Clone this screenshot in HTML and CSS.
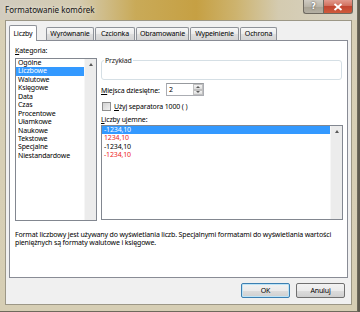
FILE: index.html
```html
<!DOCTYPE html>
<html lang="pl">
<head>
    <meta charset="UTF-8">
    <meta name="viewport" content="width=device-width, initial-scale=1.0">
    <title>Formatowanie komórek</title>
    <link rel="stylesheet" href="styles.css">
</head>
<body>
    <div class="window">
        <div class="titlebar">
            <span class="title">Formatowanie komórek</span>
            <div class="caption">
                <span class="cap-btn help">?</span>
                <span class="cap-btn close">
                    <svg width="10" height="8" viewBox="0 0 10 8"><path d="M1.5 1 L8.5 7 M8.5 1 L1.5 7" stroke="#fff" stroke-width="1.8"/></svg>
                </span>
            </div>
        </div>
        <div class="frame">
            <div class="client">
                <div class="tabs">
                    <span class="tab active">Liczby</span>
                    <span class="tab w-wyr">Wyrównanie</span>
                    <span class="tab w-czc">Czcionka</span>
                    <span class="tab w-obr">Obramowanie</span>
                    <span class="tab w-wyp">Wypełnienie</span>
                    <span class="tab w-och">Ochrona</span>
                </div>
                <div class="panel">
                    <div class="panel-main">
                        <div class="col-left">
                            <div class="label"><u>K</u>ategoria:</div>
                            <div class="listbox cat">
                                <div class="items">
                                    <div class="item">Ogólne</div>
                                    <div class="item selected">Liczbowe</div>
                                    <div class="item">Walutowe</div>
                                    <div class="item">Księgowe</div>
                                    <div class="item">Data</div>
                                    <div class="item">Czas</div>
                                    <div class="item">Procentowe</div>
                                    <div class="item">Ułamkowe</div>
                                    <div class="item">Naukowe</div>
                                    <div class="item">Tekstowe</div>
                                    <div class="item">Specjalne</div>
                                    <div class="item">Niestandardowe</div>
                                </div>
                                <div class="scrollbar"><span class="arrow-up"></span></div>
                            </div>
                        </div>
                        <div class="col-right">
                            <fieldset class="sample">
                                <legend>Przykład</legend>
                                <div class="sample-body"></div>
                            </fieldset>
                            <div class="row-dec">
                                <span class="dec-label"><u>M</u>iejsca dziesiętne:</span>
                                <div class="spin">
                                    <span class="spin-value">2</span>
                                    <div class="spin-btns">
                                        <span class="spin-btn"><span class="arrow-up small"></span></span>
                                        <span class="spin-btn"><span class="arrow-down small"></span></span>
                                    </div>
                                </div>
                            </div>
                            <div class="row-check">
                                <span class="checkbox"></span>
                                <span><u>U</u>żyj separatora 1000 ( )</span>
                            </div>
                            <div class="label neg-label"><u>L</u>iczby ujemne:</div>
                            <div class="listbox neg">
                                <div class="items">
                                    <div class="item selected">-1234,10</div>
                                    <div class="item red">1234,10</div>
                                    <div class="item">-1234,10</div>
                                    <div class="item red">-1234,10</div>
                                </div>
                                <div class="scrollbar"><span class="arrow-up"></span></div>
                            </div>
                        </div>
                    </div>
                    <p class="desc">Format liczbowy jest używany do wyświetlania liczb. Specjalnymi formatami do wyświetlania wartości<br>pieniężnych są formaty walutowe i księgowe.</p>
                </div>
                <div class="buttons">
                    <button class="btn default">OK</button>
                    <button class="btn">Anuluj</button>
                </div>
            </div>
        </div>
    </div>
</body>
</html>
```

FILE: styles.css
```css
body {
    margin: 0;
    background-color: #5f5b4f;
    font-family: 'Noto Sans', 'Open Sans', sans-serif;
    font-size: 7px;
    letter-spacing: -0.15px;
    color: #000;
}

.window {
    width: 358px;
    height: 312px;
    display: flex;
    flex-direction: column;
    box-sizing: border-box;
    border-right: 1px solid #6e6a5c;
    border-bottom: 1px solid #6e6a5c;
    background-color: #d9d1b9;
}

.titlebar {
    height: 20px;
    display: flex;
    align-items: flex-start;
    background: linear-gradient(to right, #d2ccbf 0%, #d4cbb0 22%, #c9aa58 38%, #c6a043 55%, #cdb36e 66%, #d4cbb0 78%, #d8d3c6 100%);
}

.title {
    padding: 5px 0 0 5px;
    font-size: 8px;
    letter-spacing: 0;
    line-height: 10px;
    color: #111;
    text-shadow: 0 0 4px rgba(255, 255, 255, 0.8);
}

.caption {
    margin-left: auto;
    margin-right: 4px;
    display: flex;
}

.cap-btn {
    height: 14px;
    display: flex;
    align-items: center;
    justify-content: center;
    box-sizing: border-box;
    border: 1px solid #6f6a60;
    border-top: none;
}

.help {
    width: 20px;
    border-radius: 0 0 0 3px;
    border-right: none;
    background: linear-gradient(#cfcbc2, #b9b4a8 50%, #a7a294 51%, #b5b0a4);
    color: #fff;
    font-family: 'DejaVu Sans', sans-serif;
    font-weight: bold;
    font-size: 8px;
    text-shadow: 0 0 2px #333;
}

.close {
    width: 30px;
    border-radius: 0 0 3px 0;
    background: linear-gradient(#e2998c, #d1705d 45%, #c24530 50%, #cf5a3c);
}

.frame {
    flex: 1;
    display: flex;
    padding: 0 5px 6px 5px;
    background: linear-gradient(#d8d0b6, #d6ceb4);
}

.client {
    flex: 1;
    display: flex;
    flex-direction: column;
    border: 1px solid #9c9786;
    background-color: #f0f0f0;
    padding: 4px 3px 0 3px;
}

.tabs {
    display: flex;
    align-items: flex-end;
    height: 15px;
    position: relative;
    z-index: 1;
}

.tab {
    height: 13px;
    box-sizing: border-box;
    margin-right: 1px;
    border: 1px solid #8e9299;
    border-bottom: none;
    border-radius: 2px 2px 0 0;
    background: linear-gradient(#f7f7f7, #ebebeb 50%, #dedede 51%, #d4d4d4);
    line-height: 11px;
    text-align: center;
    white-space: nowrap;
}

.tab.active {
    width: 28px;
    height: 16px;
    margin-right: 9px;
    margin-bottom: -1px;
    background: #fff;
    line-height: 15px;
}

.w-wyr { width: 48px; }
.w-czc { width: 40px; }
.w-obr { width: 53px; }
.w-wyp { width: 49px; }
.w-och { width: 37px; }

.panel {
    height: 238px;
    box-sizing: border-box;
    border: 1px solid #898c95;
    background-color: #fff;
    padding: 5px 0 0 5px;
}

.panel-main {
    display: flex;
}

.col-left {
    width: 82px;
}

.label {
    line-height: 9px;
    white-space: nowrap;
}

.listbox {
    display: flex;
    box-sizing: border-box;
    border: 1px solid #828790;
    background-color: #fff;
}

.listbox.cat {
    height: 163px;
    margin-top: 3px;
}

.items {
    flex: 1;
}

.item {
    height: 8.45px;
    line-height: 8.45px;
    padding-left: 2px;
    white-space: nowrap;
}

.item.selected {
    background-color: #3399ff;
    color: #fff;
}

.item.red {
    color: #ee1c24;
}

.scrollbar {
    width: 11px;
    display: flex;
    flex-direction: column;
    align-items: center;
    background-color: #ececec;
    border-left: 1px solid #f6f6f6;
}

.arrow-up {
    margin-top: 4px;
    width: 0;
    height: 0;
    border-left: 2.5px solid transparent;
    border-right: 2.5px solid transparent;
    border-bottom: 3px solid #5a5a5a;
}

.arrow-down {
    width: 0;
    height: 0;
    border-left: 2.5px solid transparent;
    border-right: 2.5px solid transparent;
    border-top: 3px solid #5a5a5a;
}

.arrow-up.small {
    margin-top: 0;
    border-left-width: 2px;
    border-right-width: 2px;
    border-bottom-width: 2px;
}

.arrow-down.small {
    border-left-width: 2px;
    border-right-width: 2px;
    border-top-width: 2px;
}

.col-right {
    width: 242px;
    margin-left: 4px;
}

.sample {
    margin: 10px 1px 0 0;
    padding: 0;
    border: 1px solid #d5dfe5;
    border-radius: 3px;
}

.sample legend {
    padding: 0 1px;
    margin-left: 2px;
    line-height: 9px;
    color: #222;
}

.sample-body {
    height: 14px;
}

.row-dec {
    display: flex;
    align-items: center;
    margin-top: 3px;
}

.dec-label {
    width: 65px;
    padding-top: 2px;
    white-space: nowrap;
}

.spin {
    width: 38px;
    height: 13px;
    box-sizing: border-box;
    display: flex;
    border: 1px solid #abadb3;
    border-top-color: #979a9e;
}

.spin-value {
    flex: 1;
    padding-left: 2px;
    line-height: 11px;
}

.spin-btns {
    width: 10px;
    display: flex;
    flex-direction: column;
}

.spin-btn {
    flex: 1;
    display: flex;
    align-items: center;
    justify-content: center;
    box-sizing: border-box;
    border: 1px solid #c0c0c0;
    background: linear-gradient(#f4f4f4, #dcdcdc);
}

.row-check {
    display: flex;
    align-items: center;
    gap: 3px;
    margin-top: 6px;
    line-height: 9px;
    white-space: nowrap;
}

.checkbox {
    width: 9px;
    height: 9px;
    margin-left: 1px;
    box-sizing: border-box;
    border: 1px solid #8f8f8f;
    background: linear-gradient(135deg, #d2d2d2, #f2f2f2);
}

.neg-label {
    margin-top: 4px;
}

.listbox.neg {
    height: 95px;
    margin-top: 1px;
}

.listbox.neg .item {
    height: 8.3px;
    line-height: 8.3px;
}

.desc {
    margin: 10px 0 0 0;
    line-height: 8.4px;
    white-space: nowrap;
}

.buttons {
    display: flex;
    justify-content: flex-end;
    gap: 6px;
    margin-top: 5px;
    padding-right: 3px;
}

.btn {
    width: 49px;
    height: 15px;
    padding: 0;
    font-family: inherit;
    font-size: 7px;
    letter-spacing: -0.15px;
    color: #000;
    border: 1px solid #707070;
    border-radius: 2px;
    background: linear-gradient(#f2f2f2, #ebebeb 50%, #dddddd 51%, #cfcfcf);
}

.btn.default {
    border-color: #3c7fb1;
    box-shadow: inset 0 0 0 1px #bde4f7;
}

u {
    text-decoration-thickness: 0.5px;
    text-underline-offset: 1px;
}
```
